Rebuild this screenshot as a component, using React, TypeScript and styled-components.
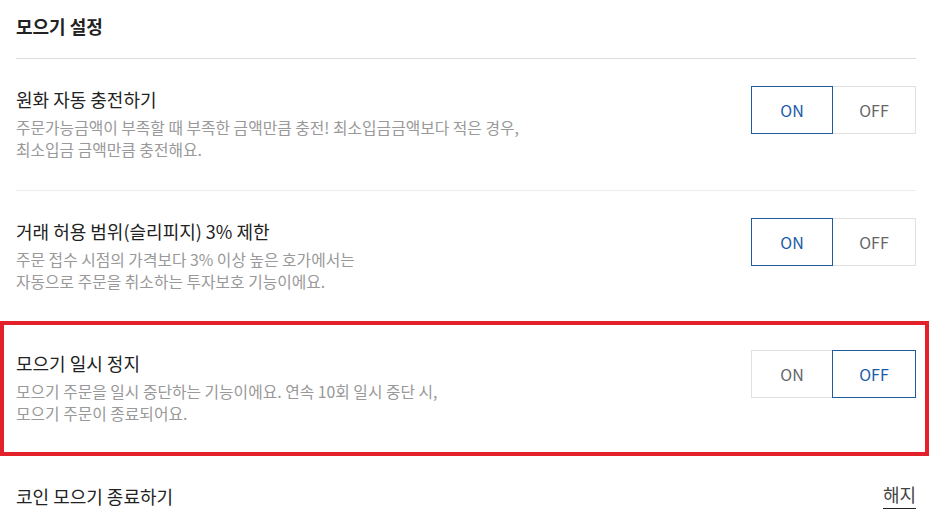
import styled, { createGlobalStyle } from "styled-components";

const GlobalStyle = createGlobalStyle`
  body {
    margin: 0;
    background: #fff;
    font-family: "Noto Sans CJK KR", "Noto Sans", sans-serif;
  }
`;

const settings = [
  {
    title: "원화 자동 충전하기",
    desc: [
      "주문가능금액이 부족할 때 부족한 금액만큼 충전! 최소입금금액보다 적은 경우,",
      "최소입금 금액만큼 충전해요.",
    ],
    on: true,
    marked: false,
  },
  {
    title: "거래 허용 범위(슬리피지) 3% 제한",
    desc: [
      "주문 접수 시점의 가격보다 3% 이상 높은 호가에서는",
      "자동으로 주문을 취소하는 투자보호 기능이에요.",
    ],
    on: true,
    marked: false,
  },
  {
    title: "모으기 일시 정지",
    desc: [
      "모으기 주문을 일시 중단하는 기능이에요. 연속 10회 일시 중단 시,",
      "모으기 주문이 종료되어요.",
    ],
    on: false,
    marked: true,
  },
];

const App = () => {
  return (
    <>
      <GlobalStyle />
      <Page>
        <Header>모으기 설정</Header>
        {settings.map((item, index) => (
          <Row key={index} $last={index === settings.length - 1}>
            {item.marked && <Highlight />}
            <RowText>
              <RowTitle>{item.title}</RowTitle>
              <RowDesc>
                {item.desc.map((line, i) => (
                  <span key={i}>{line}</span>
                ))}
              </RowDesc>
            </RowText>
            <Toggle>
              <ToggleButton $active={item.on}>ON</ToggleButton>
              <ToggleButton $active={!item.on}>OFF</ToggleButton>
            </Toggle>
          </Row>
        ))}
        <EndRow>
          <RowTitle>코인 모으기 종료하기</RowTitle>
          <CancelLink>해지</CancelLink>
        </EndRow>
      </Page>
    </>
  );
};

export default App;

const Page = styled.div`
  width: 900px;
  padding: 0 30px 0 16px;
`;

const Header = styled.div`
  font-size: 18px;
  font-weight: 700;
  color: #222;
  line-height: 24px;
  padding: 14px 0 20px;
  border-bottom: 1px solid #dcdcdc;
`;

const Row = styled.div<{ $last: boolean }>`
  position: relative;
  display: flex;
  justify-content: space-between;
  align-items: flex-start;
  padding: 28px 0 29px;
  border-bottom: 1px solid ${(p) => (p.$last ? "transparent" : "#ececec")};
`;

const Highlight = styled.div`
  position: absolute;
  left: -16px;
  right: -13px;
  top: -2px;
  bottom: -2px;
  border: 4px solid #e3212b;
  pointer-events: none;
`;

const RowText = styled.div`
  display: flex;
  flex-direction: column;
`;

const RowTitle = styled.div`
  font-size: 18px;
  line-height: 24px;
  color: #222;
`;

const RowDesc = styled.div`
  display: flex;
  flex-direction: column;
  margin-top: 6px;
  font-size: 15.8px;
  line-height: 22px;
  color: #999;
`;

const Toggle = styled.div`
  display: flex;
  width: 165px;
  height: 48px;
  margin-top: -1px;
`;

const ToggleButton = styled.div<{ $active: boolean }>`
  flex: 1;
  display: flex;
  align-items: center;
  justify-content: center;
  font-size: 16px;
  color: ${(p) => (p.$active ? "#1a5aa8" : "#666")};
  border: 1px solid ${(p) => (p.$active ? "#1f5c9e" : "#e0e0e0")};
  position: relative;
  z-index: ${(p) => (p.$active ? 1 : 0)};
  &:first-child {
    flex: 0 0 80px;
  }
  & + & {
    margin-left: -1px;
  }
`;

const EndRow = styled.div`
  display: flex;
  justify-content: space-between;
  align-items: center;
  padding: 27px 0;
`;

const CancelLink = styled.span`
  font-size: 18px;
  line-height: 24px;
  color: #444;
  padding-bottom: 2px;
  border-bottom: 1px solid #222;
`;
